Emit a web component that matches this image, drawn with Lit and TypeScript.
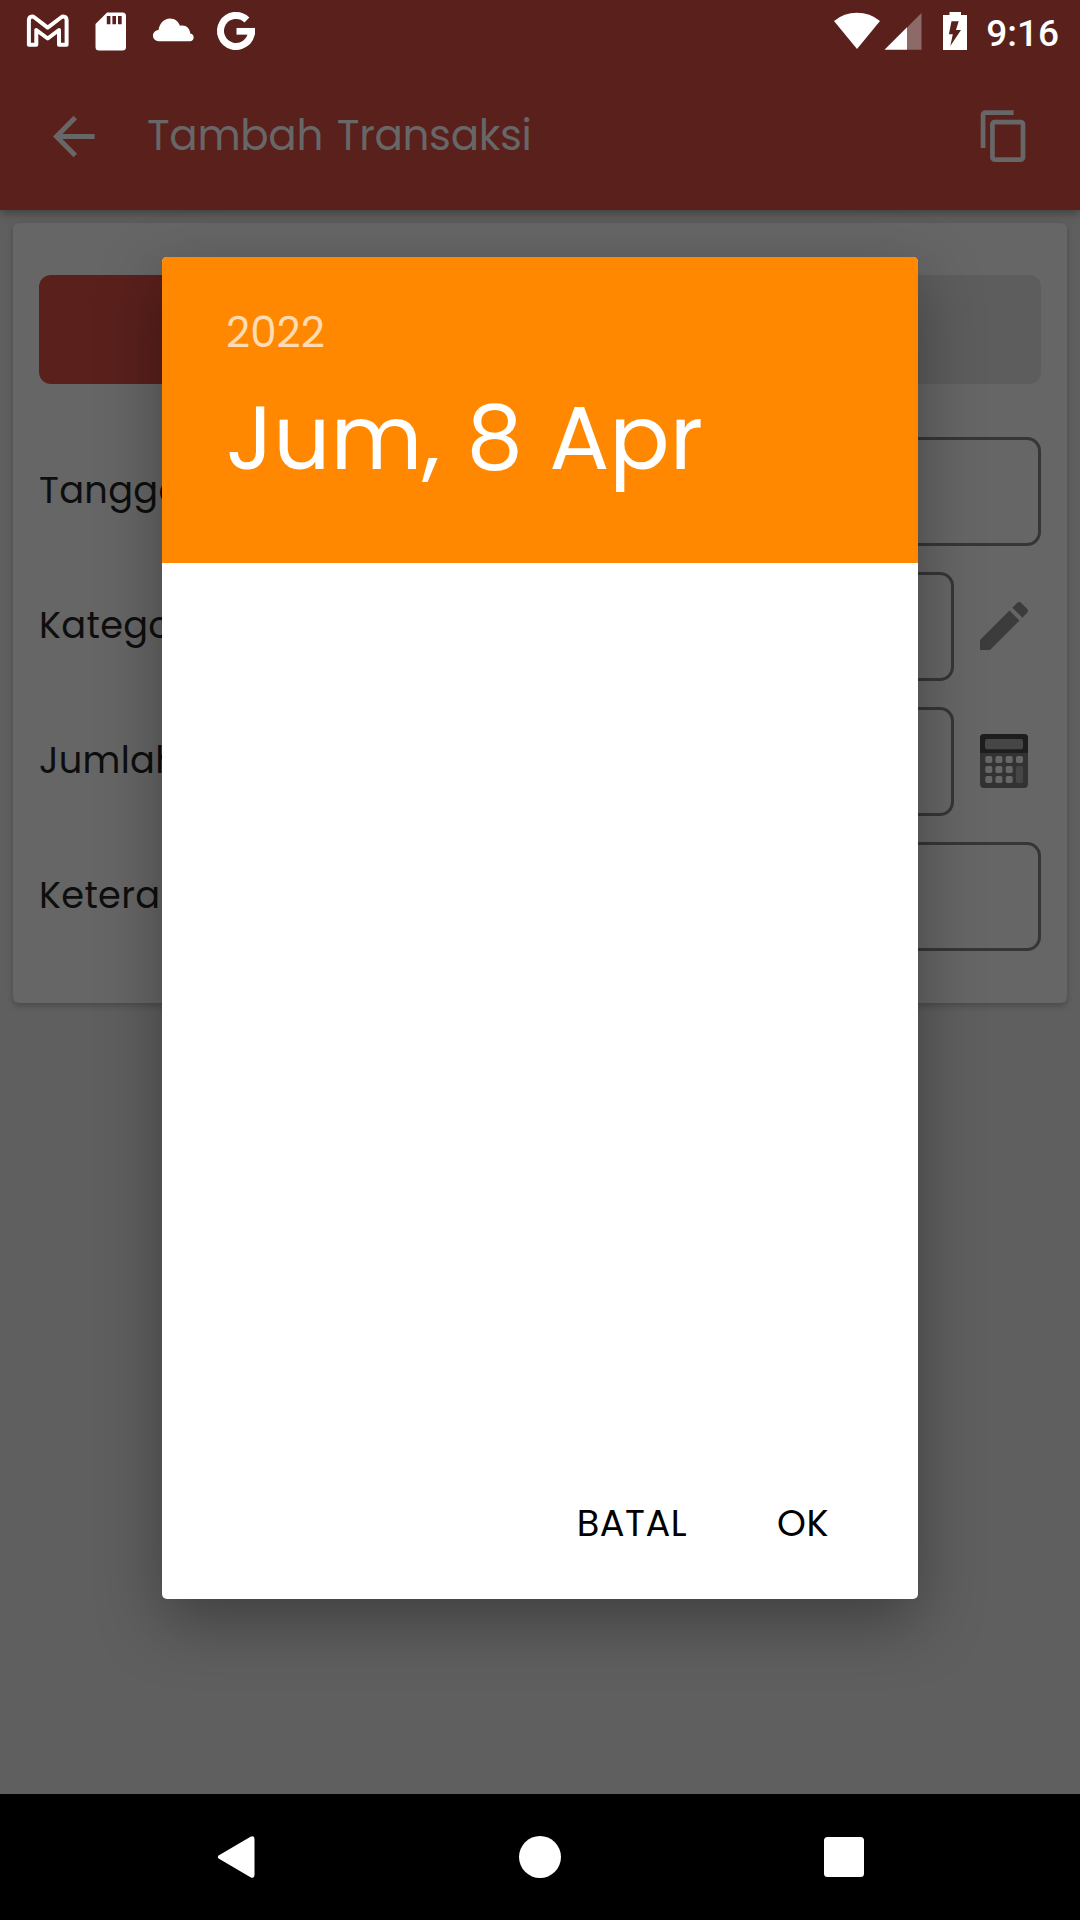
import { LitElement, html, css, svg, nothing } from "lit";
import { customElement, property } from "lit/decorators.js";

const pencil = html`<svg class="glyph pencil" viewBox="3 3 18 18"><path fill="#3c3c3c" d="M3 17.25V21h3.75L17.81 9.94l-3.75-3.75L3 17.25zM20.71 7.04c.39-.39.39-1.02 0-1.41l-2.34-2.34c-.39-.39-1.02-.39-1.41 0l-1.83 1.83 3.75 3.75 1.83-1.83z"/></svg>`;

const keys = [5.3, 15.4, 25.7, 36].flatMap((x) =>
  [22, 32, 42].filter((y) => x < 36 || y === 22).map((y) => [x, y])
);

const calculator = html`<svg class="glyph calculator" viewBox="0 0 48 54">
  <rect width="48" height="54" rx="4" fill="#333"/>
  <path d="M0 19V4a4 4 0 0 1 4-4h40a4 4 0 0 1 4 4v15z" fill="#1e1e1e"/>
  <rect x="5" y="5" width="38" height="10.3" rx="2" fill="#464646"/>
  ${keys.map(([x, y]) => svg`<rect x=${x} y=${y} width="7" height="7" rx="1.8" fill="#676767"/>`)}
  <rect x="36" y="32" width="7" height="17" rx="1.8" fill="#464646"/>
</svg>`;

@customElement("status-bar")
class StatusBar extends LitElement {
  static styles = css`
    :host { display: flex; justify-content: space-between; height: 63px; background: #5a201c; color: #fff; z-index: 2; }
    .group { display: flex; }
    .left { padding-left: 24px; gap: 14px; }
    .right { padding-right: 21px; }
    svg { display: block; height: 63px; }
    .time { font: 500 37px/67px Roboto, sans-serif; margin-left: 18px; white-space: nowrap; }
  `;
  render() {
    return html`
      <div class="group left">
        <svg width="48" viewBox="24 0 48 63"><path fill="none" stroke="#fff" stroke-width="4" stroke-linejoin="round" d="M28.9 44.7V20.2c0-3.4 3.2-4.6 5.6-2.7L47.7 27.6 61 17.5c2.4-1.9 5.6-.7 5.6 2.7V44.7H59V30L47.7 38.5 36.3 30V44.7z"/></svg>
        <svg width="48" viewBox="86 0 48 63"><path fill="#fff" fill-rule="evenodd" d="M107 12.5h15.500a3.500 3.500 0 0 1 3.500 3.500v31a3.500 3.500 0 0 1-3.500 3.500H99a3.500 3.500 0 0 1-3.500-3.500V24zM106.800 16v8.200h3.600V16zM112.400 16v8.200h3.600V16zM118 16v8.200h3.700V16z"/></svg>
        <svg width="48" viewBox="148 0 48 63"><path fill="#fff" d="M158.500 41.200a5.600 5.600 0 0 1 0-11.200c1-6.500 5.500-11.500 11.500-11.500 4.700 0 8.400 2.800 10 7.300 5.300-1.500 10 2.300 10.300 7.800a3.850 3.850 0 0 1 .2 7.600z"/></svg>
        <svg width="48" viewBox="210 0 48 63"><g fill="none" stroke="#fff"><path stroke-width="7" d="M246.900 19.900A15.500 15.500 0 1 0 251.500 31.500"/><path stroke-width="6.700" d="M236.500 31.300H255"/></g></svg>
      </div>
      <div class="group right">
        <svg width="46" viewBox="834 0 46 63"><path fill="#fff" d="M857 49L834 21Q844 12.800 857 12.800T880 21z"/></svg>
        <svg width="45" viewBox="880 0 45 63"><path fill="#8d6967" d="M907 27.500L921.500 13V49.700H907z"/><path fill="#fff" d="M884.500 49.700L907 27.300V49.700z"/></svg>
        <svg width="43" viewBox="925 0 43 63"><path fill="#fff" d="M943 15h6.500v-3H961v3h6v35h-24z"/><path fill="#5a201c" d="M951.500 21.300h7.200L956 30h5L950.300 46l2.500-11.800h-3.900z"/></svg>
        <span class="time">9:16</span>
      </div>`;
  }
}

@customElement("form-row")
class FormRow extends LitElement {
  @property() label = "";
  @property() icon = "";
  static styles = css`
    :host { display: flex; align-items: center; height: 109px; }
    .label { width: 260px; flex: none; font-size: 36.75px; line-height: 56px; letter-spacing: 0.3px; padding-bottom: 3px; color: #0e0e0e; }
    .field { flex: 1; height: 109px; box-sizing: border-box; border: 3px solid #363636; border-radius: 14px; }
    .glyph { display: block; width: 48px; margin: 0 13px 0 26px; }
    .pencil { height: 48px; margin-top: -1px; }
    .calculator { height: 54px; margin-top: -2px; }
  `;
  render() {
    return html`<span class="label">${this.label}</span><div class="field"></div>
      ${this.icon === "edit" ? pencil : this.icon === "calc" ? calculator : nothing}`;
  }
}

@customElement("app-root")
class AppRoot extends LitElement {
  static styles = css`
    :host {
      display: flex; flex-direction: column; position: relative; width: 1080px; height: 1920px; overflow: hidden;
      background: #5f5f5f; font-family: Poppins, Inter, sans-serif; font-feature-settings: "cv11";
    }
    .appbar {
      display: flex; align-items: center; height: 147px; box-sizing: border-box; padding: 0 48px 0 50px;
      background: #5a201c; color: #676767; box-shadow: 0 3px 9px rgba(0, 0, 0, 0.34); z-index: 1;
    }
    .back { width: 48px; height: 48px; }
    .title { flex: 1; margin-left: 49px; font-size: 42px; letter-spacing: -0.35px; word-spacing: 3px; line-height: 63px; padding-bottom: 3px; }
    .copy { width: 56.4px; height: 56.4px; margin-bottom: 1px; }
    .page { flex: 1; padding: 13px; }
    .card {
      height: 780px; box-sizing: border-box; padding: 52px 26px 0; background: #666; border-radius: 6px;
      box-shadow: 0 3px 6px rgba(0, 0, 0, 0.22);
    }
    .tabs { display: flex; height: 109px; margin-bottom: 53px; gap: 26px; }
    .tab { flex: 1; border-radius: 12px; background: #5d5d5d; }
    .active { background: #5a201c; }
    .rows { display: grid; gap: 26px; }
    .nav {
      display: flex; align-items: center; justify-content: space-between; height: 126px; box-sizing: border-box;
      padding: 0 212px; background: #000;
    }
    .nav svg { width: 48px; height: 48px; fill: #fff; }
    .dialog {
      position: absolute; z-index: 3; left: 162px; top: 257px; width: 756px; height: 1342px;
      display: flex; flex-direction: column; background: #fff; border-radius: 5px; overflow: hidden;
      box-shadow: 0 22px 64px rgba(0, 0, 0, 0.34);
    }
    .head { height: 306px; box-sizing: border-box; padding: 50px 65px 0 64px; background: #ff8800; color: #fff; }
    .year { font-size: 42px; line-height: 52px; color: #ffdbb2; }
    .date { margin-top: 27px; font-size: 89.25px; line-height: 104px; white-space: nowrap; letter-spacing: 0; word-spacing: 2.6px; }
    .body { flex: 1; }
    .actions { display: flex; justify-content: flex-end; height: 151px; box-sizing: border-box; padding: 51px 89px 0 0; gap: 90px; font-size: 36.75px; line-height: 48px; color: #000; letter-spacing: 0.5px; }
  `;
  render() {
    return html`
      <status-bar></status-bar>
      <header class="appbar">
        <svg class="back" viewBox="50 113 48 48"><path fill="none" stroke="#676767" stroke-width="5" d="M75.300 117.500L56.500 136.500L75.300 155.500M56 136.500H94.600"/></svg>
        <span class="title">Tambah Transaksi</span>
        <svg class="copy" viewBox="0 0 24 24"><path fill="#676767" d="M16 1H4c-1.1 0-2 .9-2 2v14h2V3h12V1zm3 4H8c-1.1 0-2 .9-2 2v14c0 1.1.9 2 2 2h11c1.1 0 2-.9 2-2V7c0-1.1-.9-2-2-2zm0 16H8V7h11v14z"/></svg>
      </header>
      <main class="page">
        <section class="card">
          <div class="tabs"><div class="tab active"></div><div class="tab"></div></div>
          <div class="rows">
            <form-row label="Tanggal"></form-row>
            <form-row label="Kategori" icon="edit"></form-row>
            <form-row label="Jumlah" icon="calc"></form-row>
            <form-row label="Keterangan"></form-row>
          </div>
        </section>
      </main>
      <footer class="nav">
        <svg viewBox="212 1833 48 48"><path d="M219 1855.200L250.500 1836.800Q254.500 1835 254.500 1839V1875Q254.500 1879 250.500 1877.200L219 1858.800Q216.500 1857 219 1855.200z"/></svg>
        <svg viewBox="516 1833 48 48"><circle cx="540" cy="1857" r="21"/></svg>
        <svg viewBox="820 1833 48 48"><rect x="824" y="1837" width="40" height="40" rx="3.500"/></svg>
      </footer>
      <div class="dialog">
        <div class="head"><div class="year">2022</div><div class="date">Jum, 8 Apr</div></div>
        <div class="body"></div>
        <div class="actions"><span>BATAL</span><span>OK</span></div>
      </div>`;
  }
}
